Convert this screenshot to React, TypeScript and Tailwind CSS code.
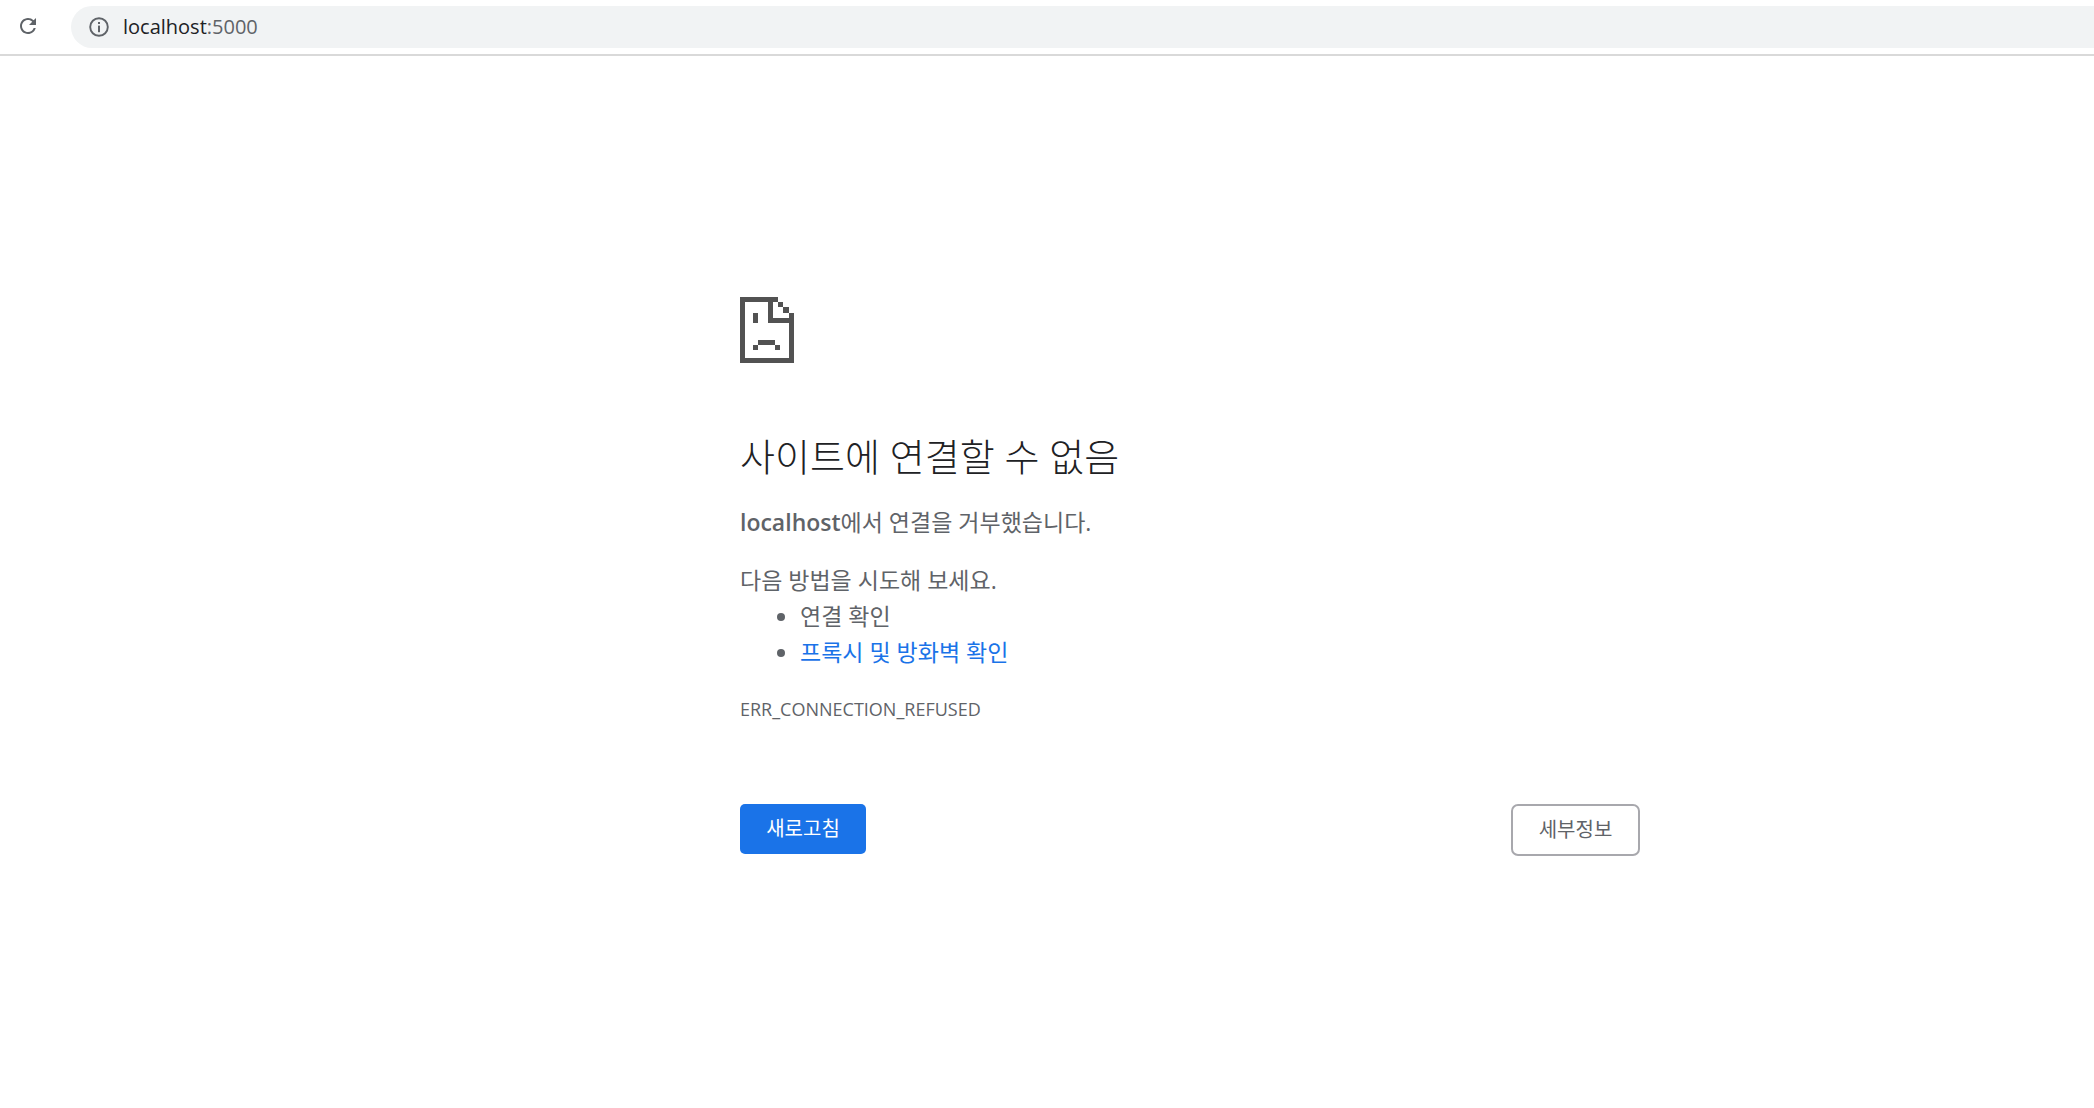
import React from "react";

const font = { };

function SadPage() {
  return (
    <svg width="54" height="66" viewBox="0 0 54 66" shapeRendering="crispEdges" fill="#525252" className="block">
      <rect x="0" y="0" width="38" height="5" />
      <rect x="0" y="0" width="5" height="66" />
      <rect x="0" y="61" width="54" height="5" />
      <rect x="49" y="16" width="5" height="50" />
      <rect x="28" y="0" width="5" height="26" />
      <rect x="28" y="21" width="26" height="5" />
      <rect x="38" y="5" width="5" height="5" />
      <rect x="43" y="10" width="6" height="6" />
      <rect x="13" y="16" width="5" height="10" />
      <rect x="18" y="43" width="17" height="5" />
      <rect x="13" y="48" width="5" height="5" />
      <rect x="35" y="48" width="5" height="5" />
    </svg>
  );
}

export default function App() {
  return (
    <div className="min-h-[1108px] bg-white font-['Open_Sans','Noto_Sans_CJK_KR',sans-serif] text-[#5f6368]">
      <header className="h-[56px] border-b-2 border-[#d9d9d9] pt-[6px] pl-[71px] flex">
        <div className="flex-1 h-[42px] rounded-l-[21px] bg-[#f1f3f4] flex items-center relative">
          <svg width="24" height="24" viewBox="0 0 24 24" className="absolute left-[-55px] top-[8px]" fill="#5f6368">
            <path d="M17.65 6.35A7.958 7.958 0 0 0 12 4c-4.42 0-7.99 3.58-7.99 8s3.57 8 7.99 8c3.73 0 6.84-2.55 7.73-6h-2.08A5.99 5.99 0 0 1 12 18c-3.31 0-6-2.69-6-6s2.69-6 6-6c1.66 0 3.14.69 4.22 1.78L13 11h7V4l-2.35 2.35z" />
          </svg>
          <svg width="22" height="22" viewBox="0 0 22 22" className="ml-[17px]" fill="none" stroke="#5f6368">
            <circle cx="11" cy="11" r="8.8" strokeWidth="1.9" />
            <rect x="10" y="9.6" width="2" height="6.6" fill="#5f6368" stroke="none" />
            <rect x="10" y="6" width="2" height="2" fill="#5f6368" stroke="none" />
          </svg>
          <span className="ml-[13px] text-[20px] text-[#202124]">
            localhost<span className="text-[#5f6368]">:5000</span>
          </span>
        </div>
      </header>
      <main className="pl-[740px] pr-[454px] pt-[241px]">
        <SadPage />
        <h1 className="mt-[69px] text-[38px] leading-[48px] font-light text-[#202124]">사이트에 연결할 수 없음</h1>
        <p className="mt-[24px] text-[23px] leading-[36px]">
          <strong className="font-semibold">localhost</strong>에서 연결을 거부했습니다.
        </p>
        <p className="mt-[22px] text-[23px] leading-[36px]">다음 방법을 시도해 보세요.</p>
        <ul className="list-disc pl-[60px] text-[23px] leading-[36px]">
          <li>연결 확인</li>
          <li>
            <a className="text-[#1a73e8]">프록시 및 방화벽 확인</a>
          </li>
        </ul>
        <div className="mt-[27px] text-[18px] leading-[24px]">ERR_CONNECTION_REFUSED</div>
        <div className="mt-[83px] flex justify-between items-start">
          <button className="w-[126px] h-[50px] rounded-[5px] bg-[#1a73e8] text-white text-[20px]">새로고침</button>
          <button className="w-[129px] h-[52px] rounded-[7px] border-2 border-[#a8a8ad] bg-white text-[#5f6368] text-[20px]">세부정보</button>
        </div>
      </main>
    </div>
  );
}
